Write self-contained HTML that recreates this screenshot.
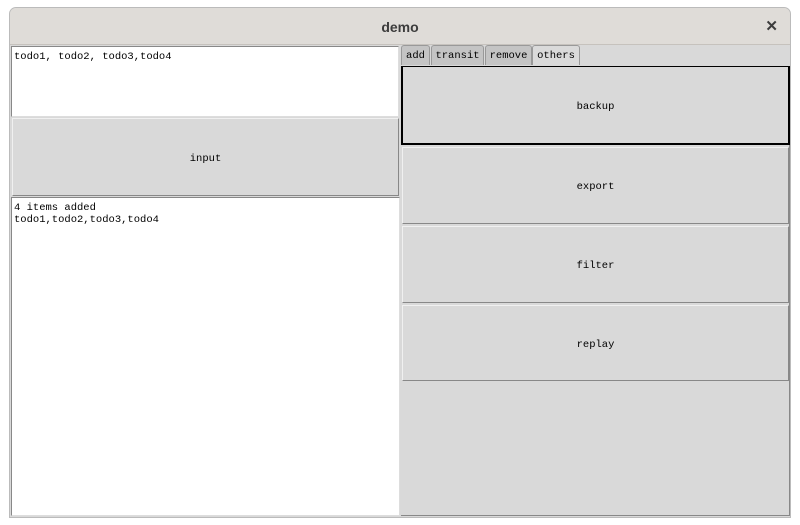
<!DOCTYPE html><html><head><style>
body{margin:0;width:800px;height:525px;background:#fff;position:relative;overflow:hidden;font-family:"Liberation Mono",monospace;font-size:10px;color:#000}
.a{position:absolute;box-sizing:border-box}
.win{left:9px;top:7px;width:782px;height:511px;background:#d9d9d9;border:1px solid #bbb;border-radius:7px 7px 0 0;overflow:hidden}
.tb{left:0;top:0;width:100%;height:37px;background:#dfdcd8;border-bottom:1px solid #c6c2bd;font-family:"Liberation Sans",sans-serif;font-weight:bold;font-size:14px;color:#3c3c3c;text-align:center;line-height:38px}
.txt{background:#fff;border:1px solid #888;border-right-color:#ddd;border-bottom-color:#ddd;padding:4px 2px;line-height:12px;white-space:pre;font-size:10.5px}
.btn{background:#d9d9d9;border:1px solid #f0f0f0;border-right-color:#888;border-bottom-color:#888;display:flex;align-items:center;justify-content:center;padding-top:3px;font-size:10.5px}
.tab{top:45px;height:20px;background:#c4c4c4;border:1px solid #999;border-bottom:none;border-radius:3px 3px 0 0;text-align:center;line-height:21px;font-size:10.5px}
</style></head><body>
<div class="a win"><div class="a tb">demo<span style="position:absolute;right:12px;top:0;font-size:15px">✕</span></div></div>
<div class="a txt" style="left:11px;top:46px;width:388px;height:71px">todo1, todo2, todo3,todo4</div>
<div class="a btn" style="left:12px;top:118px;width:387px;height:78px">input</div>
<div class="a txt" style="left:11px;top:197px;width:389px;height:319px">4 items added
todo1,todo2,todo3,todo4</div>
<div class="a" style="left:401px;top:66px;width:389px;height:450px;border-right:1px solid #888;border-bottom:1px solid #888"></div>
<div class="a tab" style="left:401px;width:29px">add</div>
<div class="a tab" style="left:431px;width:53px">transit</div>
<div class="a tab" style="left:485px;width:47px">remove</div>
<div class="a tab" style="left:532px;width:48px;background:#dadada">others</div>
<div class="a btn" style="left:401px;top:66px;width:389px;height:79px;border:2px solid #000;border-top-width:1px">backup</div>
<div class="a btn" style="left:402px;top:147px;width:387px;height:77px">export</div>
<div class="a btn" style="left:402px;top:226px;width:387px;height:77px">filter</div>
<div class="a btn" style="left:402px;top:305px;width:387px;height:76px">replay</div>
</body></html>
